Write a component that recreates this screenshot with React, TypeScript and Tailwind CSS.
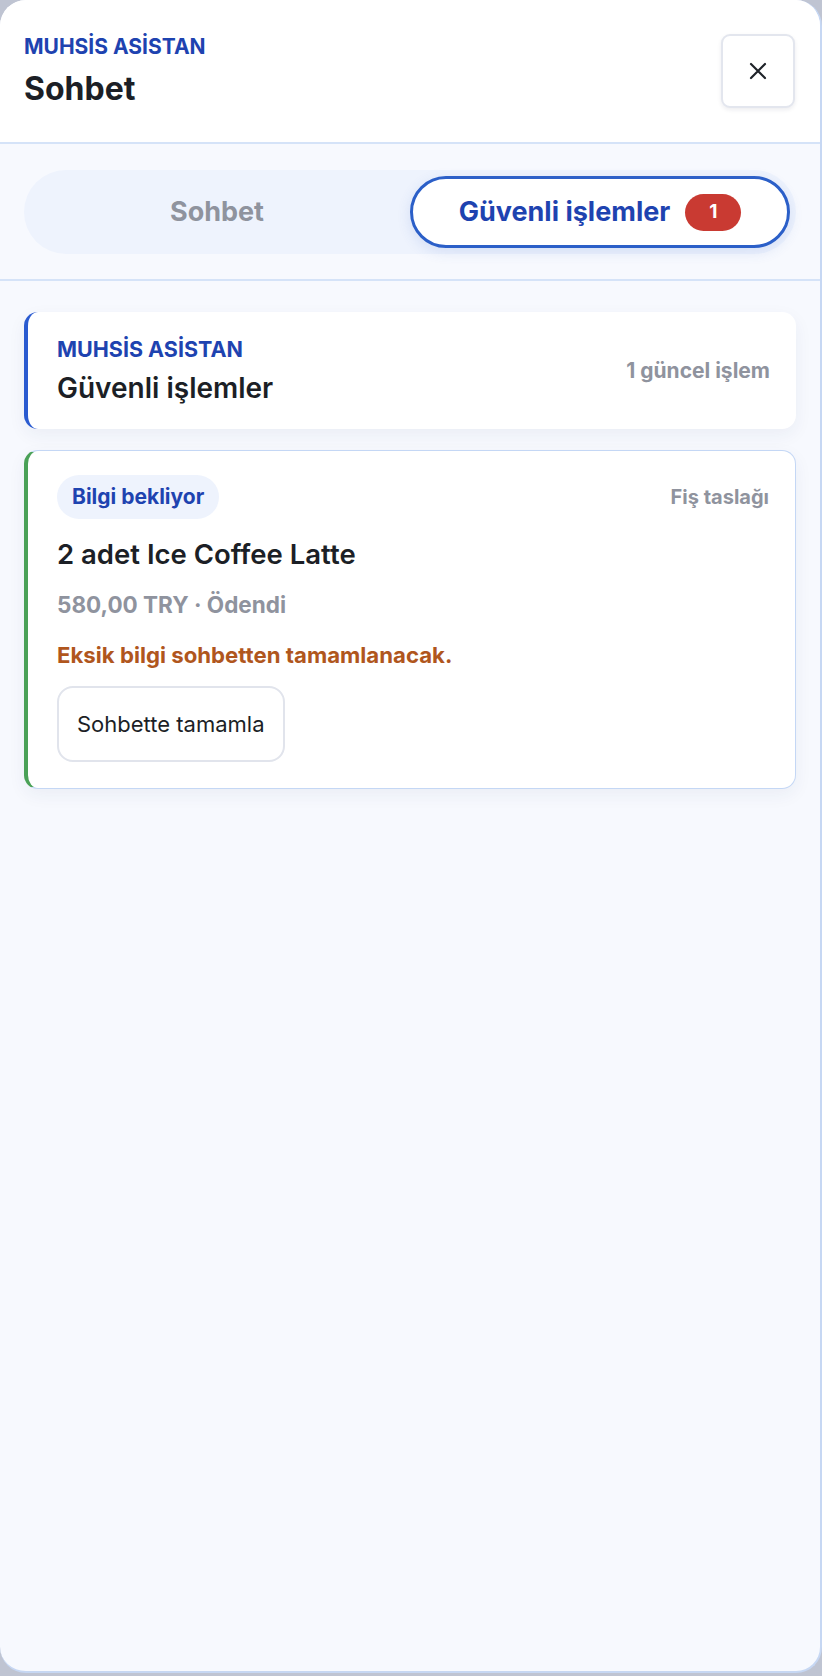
import React from "react";

function XIcon() {
  return (
    <svg width="24" height="24" viewBox="0 0 24 24" fill="none" stroke="#1f2329" strokeWidth="2.2" strokeLinecap="round">
      <path d="M5 5l14 14M19 5L5 19" />
    </svg>
  );
}

export default function App() {
  return (
    <div className="w-[822px] h-[1676px] bg-[#bfc4d2] font-['Inter',sans-serif]">
      <div className="h-[1673px] flex flex-col rounded-[26px] bg-[#f7f9fe] border-r-2 border-b-2 border-[#c6d7f3] overflow-hidden">
        {/* Header */}
        <div className="h-[144px] shrink-0 bg-white border-b-2 border-[#d5e3f8] flex items-center justify-between pl-6 pr-[25px]">
          <div className="flex flex-col">
            <div className="text-[21px] leading-[24px] font-bold text-[#1e43b0]">MUHSİS ASİSTAN</div>
            <div className="mt-[11px] text-[32px] leading-[38px] font-bold text-[#1c1f26]">Sohbet</div>
          </div>
          <button className="w-[74px] h-[74px] rounded-[9px] bg-white border-2 border-[#e3e6ee] shadow-[0_2px_4px_rgba(20,30,60,0.08)] flex items-center justify-center">
            <XIcon />
          </button>
        </div>

        {/* Tabs */}
        <div className="shrink-0 border-b-2 border-[#d5e3f8] pt-[26px] pb-[25px] pl-6 pr-[24px]">
          <div className="h-[84px] rounded-full bg-[#eef3fd] p-[6px] flex gap-[6px]">
            <div className="flex-1 flex items-center justify-center text-[27px] font-bold text-[#8f939e]">Sohbet</div>
            <div className="flex-1 flex items-center justify-center gap-[15px] rounded-full bg-white border-[3px] border-[#2b5fc8] shadow-[0_4px_14px_rgba(60,100,200,0.14)]">
              <span className="text-[27px] font-bold text-[#1e43b0]">Güvenli işlemler</span>
              <span className="h-[37px] min-w-[56px] px-4 rounded-full bg-[#c93a32] text-white text-[19px] font-bold flex items-center justify-center">1</span>
            </div>
          </div>
        </div>

        {/* Content */}
        <div className="flex-1 flex flex-col gap-[21px] pt-[31px] pl-6 pr-[24px]">
          <div className="h-[117px] rounded-[14px] bg-white border-l-[4px] border-[#2a5bd0] shadow-[0_6px_18px_rgba(30,50,100,0.06)] flex items-center justify-between pl-[29px] pr-[26px]">
            <div className="flex flex-col">
              <div className="text-[21.5px] leading-[24px] font-bold text-[#1e43b0]">MUHSİS ASİSTAN</div>
              <div className="mt-[10px] text-[28px] leading-[34px] font-semibold text-[#1c1f26]">Güvenli işlemler</div>
            </div>
            <div className="text-[21px] font-bold text-[#8f939e]">1 güncel işlem</div>
          </div>

          <div className="rounded-[14px] bg-white border-[1.5px] border-l-[4px] border-[#c4d7f5] border-l-[#4aa157] shadow-[0_6px_18px_rgba(30,50,100,0.06)] pl-[29px] pr-[26px] pt-[24px] pb-[26px] flex flex-col">
            <div className="flex items-center justify-between">
              <span className="h-[44px] px-[15px] rounded-full bg-[#eef3fd] text-[21px] font-bold text-[#1e43b0] flex items-center">Bilgi bekliyor</span>
              <span className="text-[20px] font-bold text-[#8f939e]">Fiş taslağı</span>
            </div>
            <div className="mt-[18px] text-[27.5px] leading-[34px] font-semibold text-[#1c1f26]">2 adet Ice Coffee Latte</div>
            <div className="mt-[20px] text-[22.5px] leading-[28px] font-bold text-[#8f939e]">580,00 TRY · Ödendi</div>
            <div className="mt-[22px] text-[22.2px] leading-[28px] font-bold text-[#b0561d]">Eksik bilgi sohbetten tamamlanacak.</div>
            <div className="mt-[17px]">
              <button className="h-[76px] px-[18px] rounded-[16px] bg-white border-2 border-[#e1e4ec] text-[22px] text-[#1c1f26]">Sohbette tamamla</button>
            </div>
          </div>
        </div>
      </div>
    </div>
  );
}
